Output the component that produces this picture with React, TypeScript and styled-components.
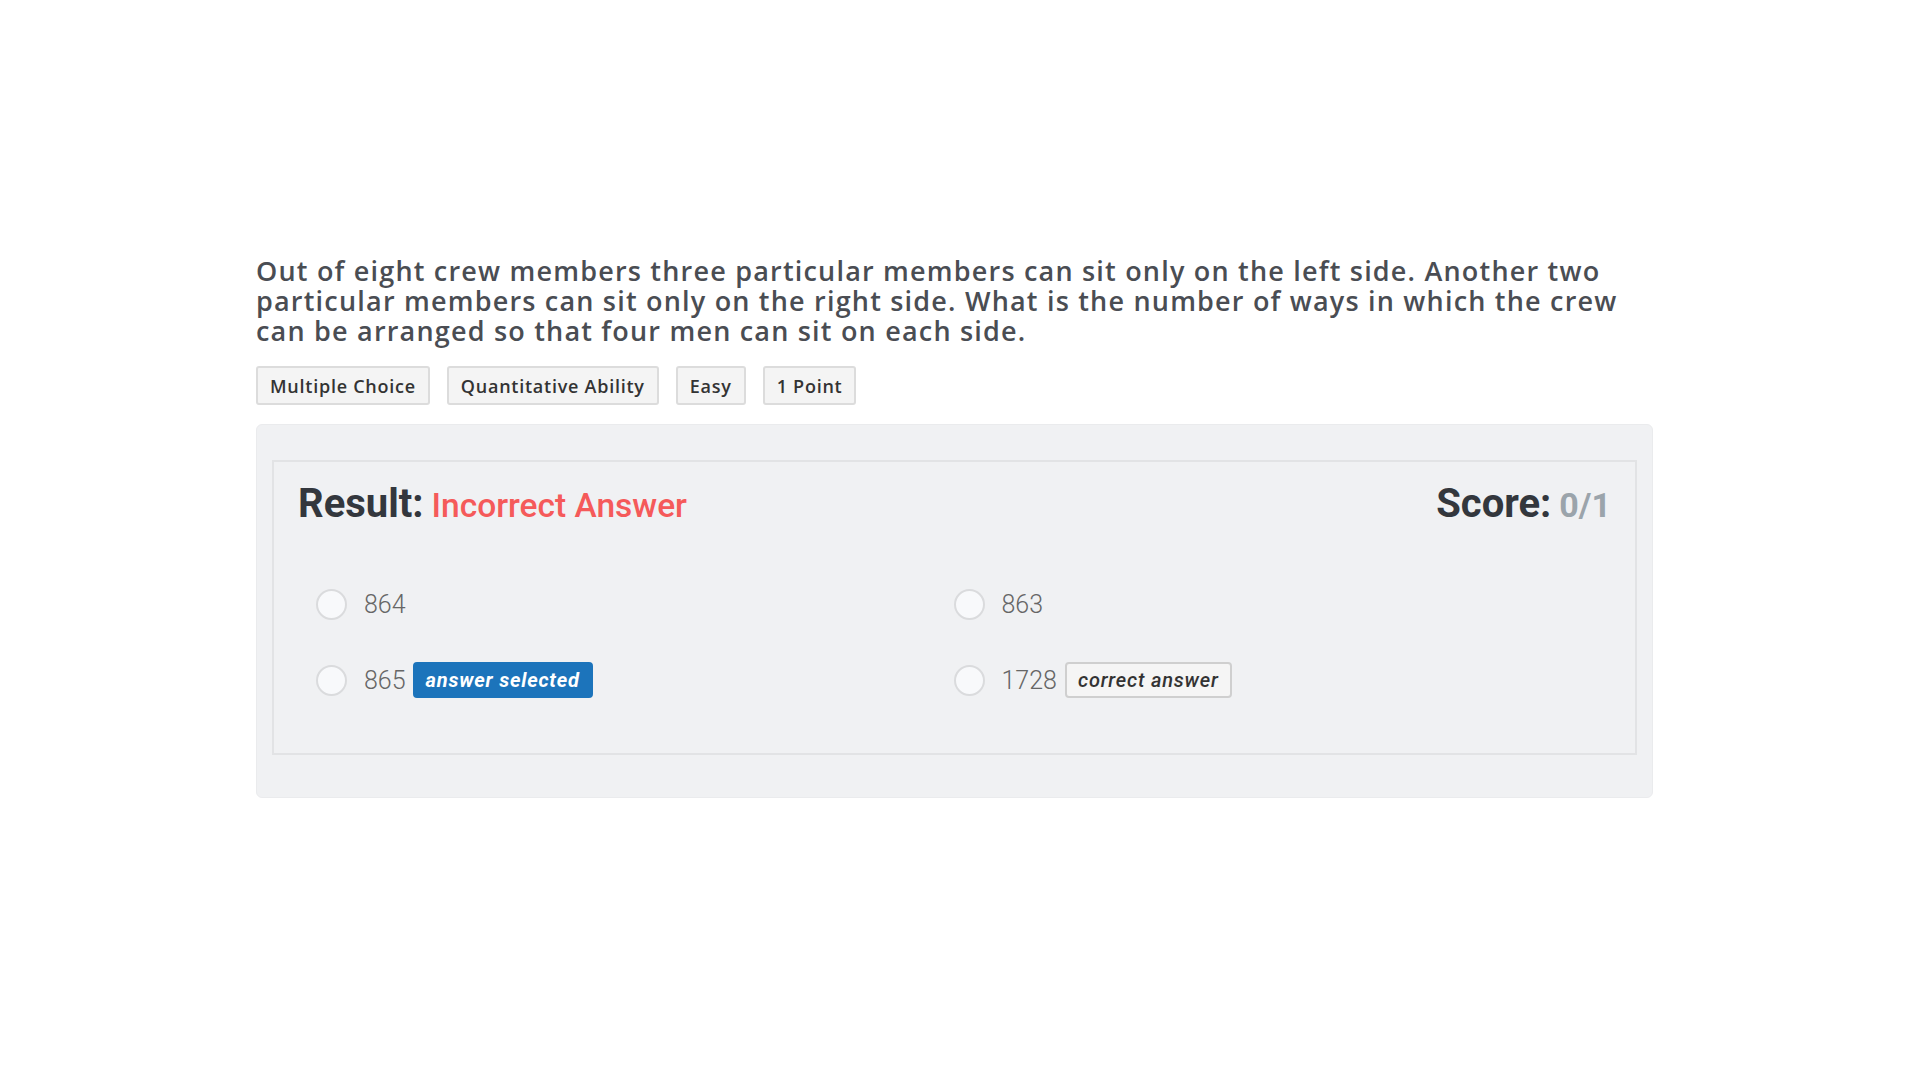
import React from "react";
import styled, { createGlobalStyle } from "styled-components";

const GlobalStyle = createGlobalStyle`
  html, body { margin: 0; padding: 0; background: #ffffff; }
  body { font-family: Roboto, "Noto Sans", Arial, sans-serif; }
`;

const Page = styled.main`
  width: 1397px;
  padding: 256px 0 0 256px;
  box-sizing: content-box;
`;

const Question = styled.h2`
  margin: 0;
  font-family: "Open Sans", "Noto Sans", sans-serif;
  font-weight: 600;
  font-size: 27px;
  line-height: 30px;
  letter-spacing: 1.2px;
  color: #4a4d53;
`;

const TagRow = styled.div`
  display: flex;
  gap: 17px;
  margin-top: 20px;
`;

const Tag = styled.span`
  display: inline-flex;
  align-items: center;
  height: 39px;
  box-sizing: border-box;
  padding: 0 12px;
  border: 2px solid #dcdcdc;
  border-radius: 3px;
  background: #f4f4f4;
  font-family: "Open Sans", "Noto Sans", sans-serif;
  font-weight: 600;
  font-size: 18px;
  letter-spacing: 0.75px;
  color: #333333;
`;

const Panel = styled.section`
  margin-top: 19px;
  background: #f0f1f3;
  border: 1px solid #eaebed;
  border-radius: 6px;
  padding: 35px 15px 42px;
`;

const Inner = styled.div`
  border: 2px solid #e2e3e5;
  padding: 18px 24px 55px;
`;

const Header = styled.div`
  display: flex;
  justify-content: space-between;
  align-items: baseline;
  line-height: 48px;
`;

const Label = styled.span`
  font-family: Roboto, sans-serif;
  font-weight: 700;
  font-size: 40px;
  color: #33373d;
`;

const Value = styled.span<{ $tone: "bad" | "muted" }>`
  font-family: Roboto, sans-serif;
  font-weight: ${(p) => (p.$tone === "bad" ? 500 : 700)};
  font-size: ${(p) => (p.$tone === "bad" ? "33.5px" : "34px")};
  color: ${(p) => (p.$tone === "bad" ? "#f55a5a" : "#9ba4ab")};
  margin-left: 8px;
`;

const Options = styled.div`
  display: grid;
  grid-template-columns: 1fr 1fr;
  row-gap: 40px;
  margin-top: 50px;
  padding: 0 20px 0 18px;
`;

const Option = styled.label`
  display: flex;
  align-items: center;
  min-height: 36px;
`;

const Radio = styled.span`
  width: 31px;
  height: 31px;
  box-sizing: border-box;
  border-radius: 50%;
  border: 2px solid #dadbdd;
  background: #f8f9fb;
  flex: none;
`;

const OptionText = styled.span`
  margin-left: 17px;
  font-family: Roboto, sans-serif;
  font-weight: 300;
  font-size: 25px;
  color: #666666;
`;

const Badge = styled.span<{ $kind: "selected" | "correct" }>`
  margin-left: ${(p) => (p.$kind === "selected" ? "7px" : "8px")};
  display: inline-flex;
  align-items: center;
  height: 36px;
  box-sizing: border-box;
  padding: 0 11px;
  border-radius: 4px;
  font-family: Roboto, sans-serif;
  font-style: italic;
  font-size: 20px;
  letter-spacing: 0.8px;
  font-weight: ${(p) => (p.$kind === "selected" ? 700 : 500)};
  color: ${(p) => (p.$kind === "selected" ? "#ffffff" : "#333333")};
  background: ${(p) => (p.$kind === "selected" ? "#1c74bb" : "#f5f5f5")};
  border: 2px solid ${(p) => (p.$kind === "selected" ? "#1c74bb" : "#cfcfcf")};
`;

type Opt = { text: string; badge?: "selected" | "correct" };

const opts: Opt[] = [
  { text: "864" },
  { text: "863" },
  { text: "865", badge: "selected" },
  { text: "1728", badge: "correct" },
];

export default function App() {
  return (
    <>
      <GlobalStyle />
      <Page>
        <Question>
          Out of eight crew members three particular members can sit only on the left side. Another two
          particular members can sit only on the right side. What is the number of ways in which the crew
          can be arranged so that four men can sit on each side.
        </Question>
        <TagRow>
          <Tag>Multiple Choice</Tag>
          <Tag>Quantitative Ability</Tag>
          <Tag>Easy</Tag>
          <Tag>1 Point</Tag>
        </TagRow>
        <Panel>
          <Inner>
            <Header>
              <div>
                <Label>Result:</Label>
                <Value $tone="bad">Incorrect Answer</Value>
              </div>
              <div>
                <Label>Score:</Label>
                <Value $tone="muted">0/1</Value>
              </div>
            </Header>
            <Options>
              {opts.map((o) => (
                <Option key={o.text}>
                  <Radio />
                  <OptionText>{o.text}</OptionText>
                  {o.badge && (
                    <Badge $kind={o.badge}>
                      {o.badge === "selected" ? "answer selected" : "correct answer"}
                    </Badge>
                  )}
                </Option>
              ))}
            </Options>
          </Inner>
        </Panel>
      </Page>
    </>
  );
}
